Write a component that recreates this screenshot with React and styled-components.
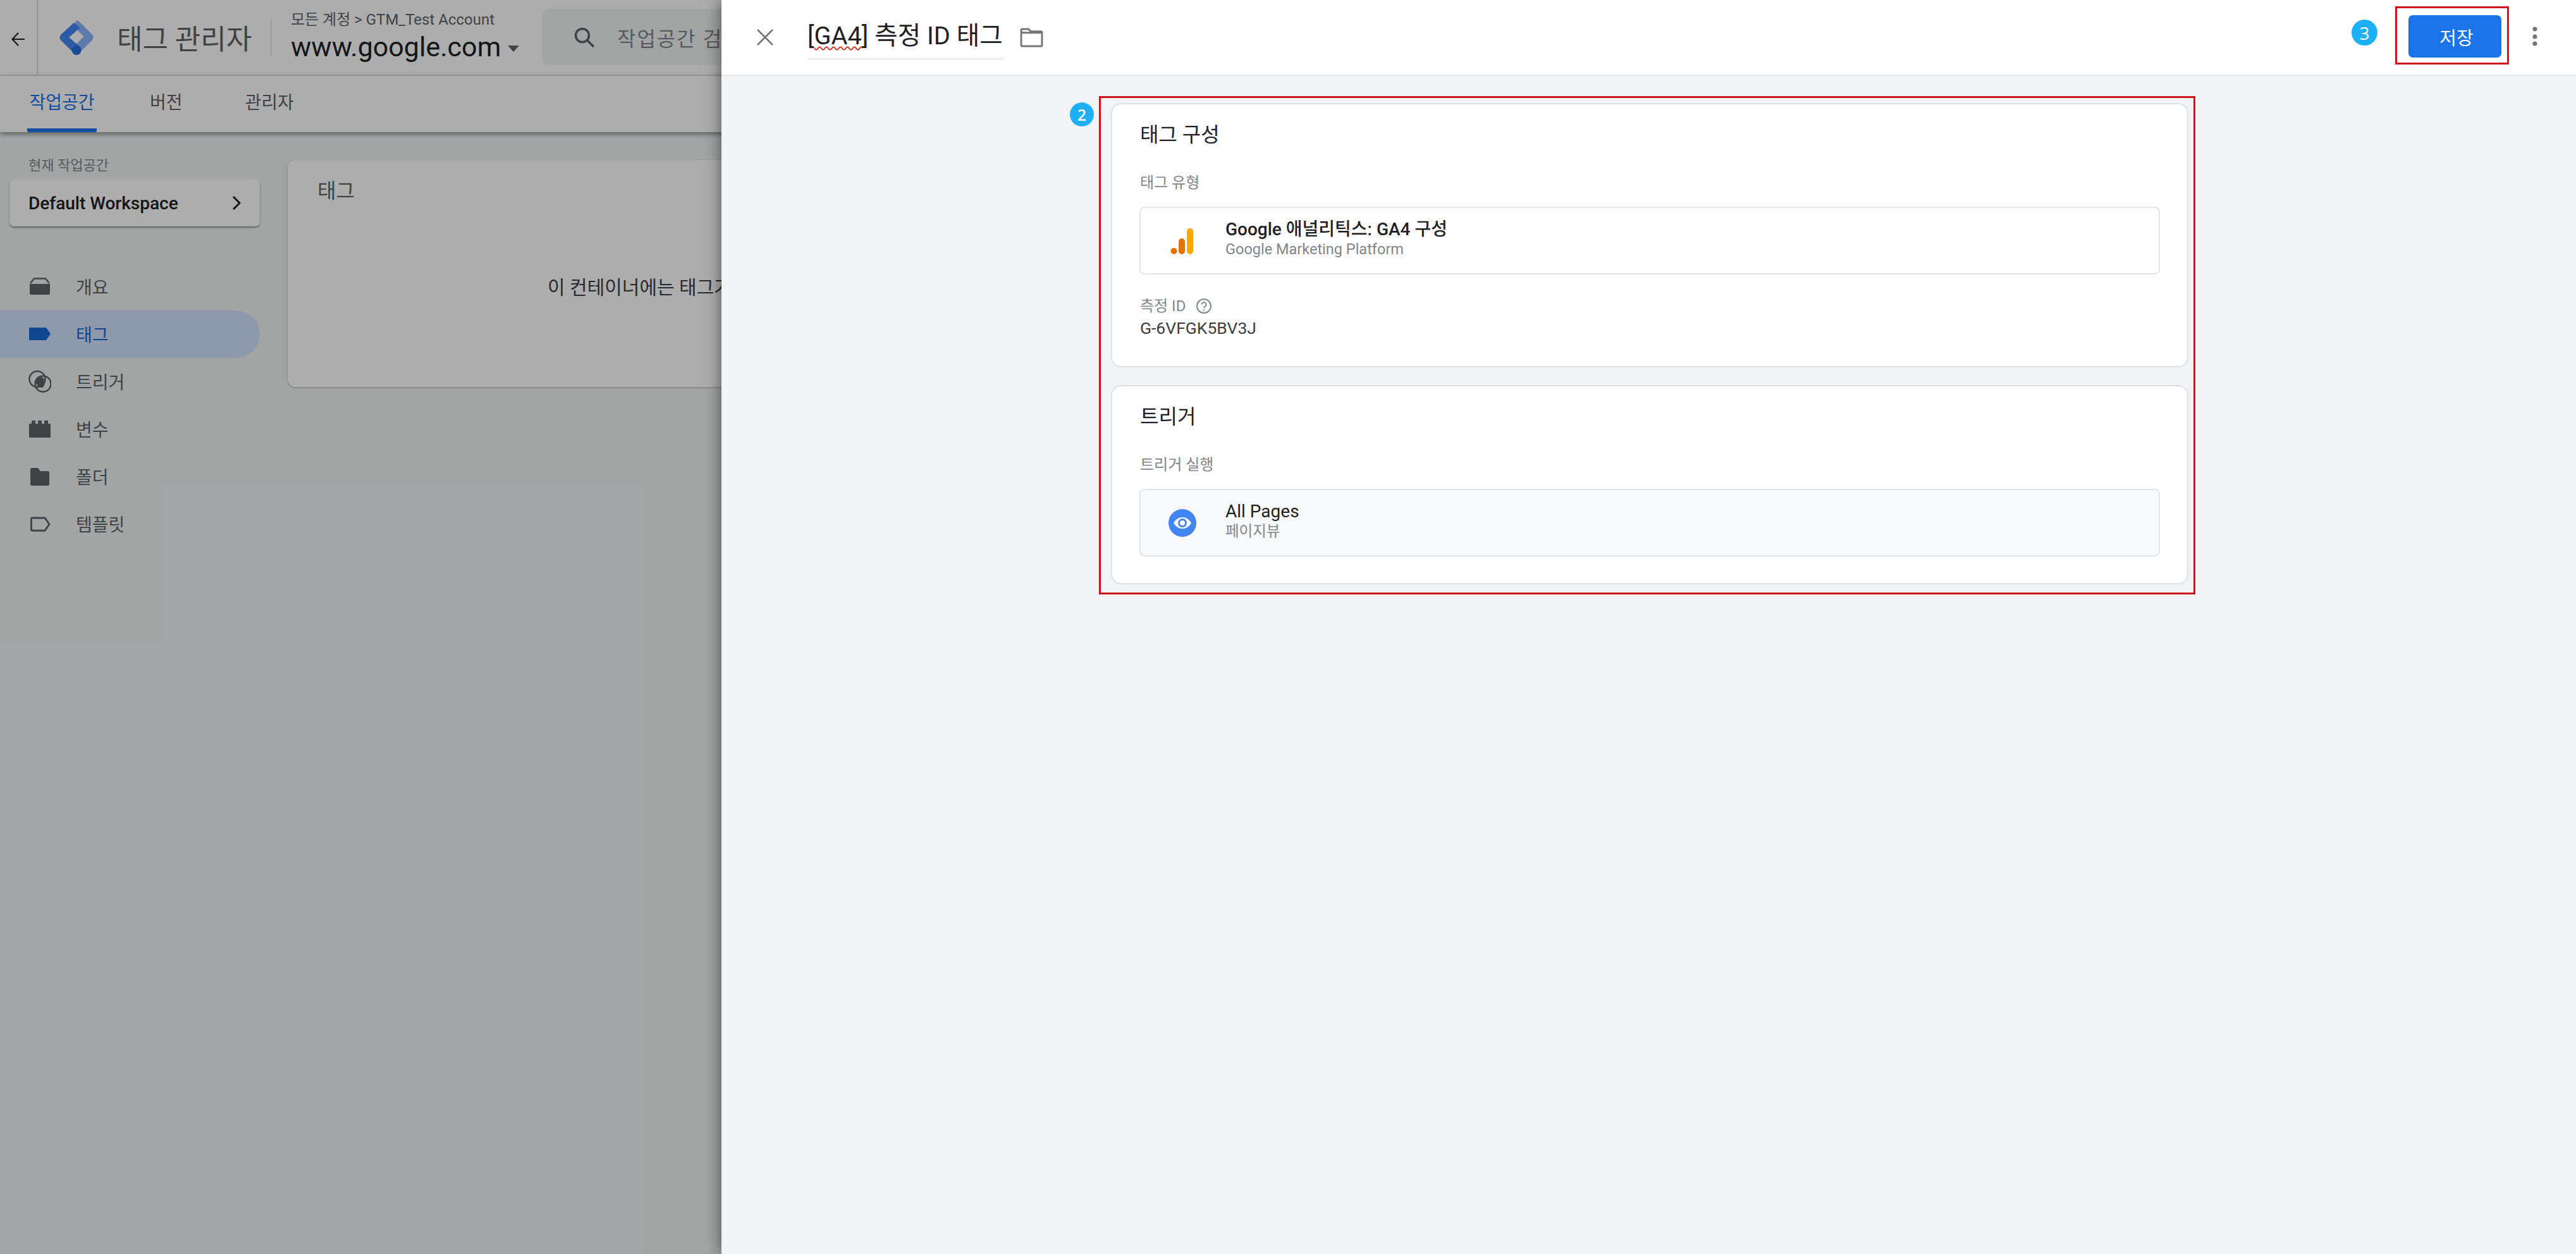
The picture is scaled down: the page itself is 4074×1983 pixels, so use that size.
import React from "react";
import styled, { createGlobalStyle } from "styled-components";

const Global = createGlobalStyle`
  html, body { margin: 0; padding: 0; background: #f1f3f4; }
  * { box-sizing: border-box; }
  body { font-family: Roboto, "Noto Sans CJK KR", sans-serif; color: #202124; }
`;

const Page = styled.div`
  position: relative;
  width: 4074px;
  height: 1983px;
  overflow: hidden;
  display: flex;
  flex-direction: column;
  background: #f1f3f4;
`;

/* ---------- background application ---------- */
const TopBar = styled.header`
  height: 120px;
  flex: none;
  display: flex;
  align-items: center;
  background: #fff;
  border-bottom: 2px solid #e8eaed;
`;
const BackCell = styled.div`
  width: 60px;
  height: 118px;
  display: flex;
  align-items: center;
  justify-content: center;
  border-right: 2px solid #dadce0;
  padding-top: 5px;
`;
const Logo = styled.svg`
  width: 60px;
  height: 60px;
  margin-left: 31px;
  flex: none;
`;
const Product = styled.div`
  margin-left: 34px;
  width: 243px;
  font-size: 44px;
  color: #5f6368;
  white-space: nowrap;
`;
const VRule = styled.div`
  width: 2px;
  height: 60px;
  background: #e8eaed;
`;
const Crumbs = styled.div`
  margin-left: 30px;
  width: 398px;
  display: flex;
  flex-direction: column;
`;
const CrumbPath = styled.div`
  font-size: 24px;
  line-height: 30px;
  color: #5f6368;
  white-space: nowrap;
  margin-top: -2px;
`;
const Domain = styled.div`
  display: flex;
  align-items: center;
  gap: 11px;
  font-size: 43px;
  line-height: 52px;
  margin-top: 2px;
  color: #202124;
`;
const Caret = styled.span`
  width: 0;
  height: 0;
  border-left: 9px solid transparent;
  border-right: 9px solid transparent;
  border-top: 10px solid #5f6368;
  margin-top: 6px;
`;
const Search = styled.div`
  width: 1900px;
  height: 89px;
  margin-top: -1px;
  display: flex;
  align-items: center;
  gap: 34px;
  padding-left: 48px;
  background: #f1f3f4;
  border-radius: 10px;
  color: #80868b;
  font-size: 32px;
  letter-spacing: 2px;
`;
const TabBar = styled.nav`
  position: relative;
  z-index: 1;
  height: 89px;
  flex: none;
  display: flex;
  background: #fff;
  box-shadow: 0 3px 8px rgba(0, 0, 0, 0.45);
  padding-left: 43px;
  gap: 99px;
`;
const Tab = styled.div`
  height: 89px;
  min-width: ${(p) => (p.$active ? "110px" : "0")};
  margin-right: ${(p) => (p.$active ? "-15px" : "0")};
  display: flex;
  align-items: center;
  justify-content: center;
  padding-bottom: 3px;
  font-size: 28px;
  color: ${(p) => (p.$active ? "#1a73e8" : "#5f6368")};
  border-bottom: 6px solid ${(p) => (p.$active ? "#1a73e8" : "transparent")};
  border-radius: 0 0 3px 3px;
`;
const Body = styled.div`
  flex: 1;
  display: flex;
`;
const Sidebar = styled.aside`
  width: 455px;
  flex: none;
  padding-top: 40px;
`;
const SideLabel = styled.div`
  padding-left: 45px;
  font-size: 22px;
  line-height: 26px;
  color: #80868b;
`;
const Workspace = styled.div`
  margin: 9px 44px 0 15px;
  height: 74px;
  padding: 0 30px 0 30px;
  display: flex;
  align-items: center;
  justify-content: space-between;
  background: #fff;
  border-radius: 7px;
  font-size: 28px;
  font-weight: 500;
  box-shadow: 0 2px 3px rgba(0, 0, 0, 0.4);
`;
const NavList = styled.div`
  margin-top: 58px;
  display: flex;
  flex-direction: column;
`;
const NavItem = styled.div`
  width: 411px;
  height: 75px;
  padding: 0 0 2px 45px;
  display: flex;
  align-items: center;
  gap: 39px;
  font-size: 28px;
  color: ${(p) => (p.$active ? "#1967d2" : "#5f6368")};
  background: ${(p) => (p.$active ? "#d2e3fc" : "transparent")};
  border-radius: 0 38px 38px 0;
`;
const NavGlyph = styled.svg`
  width: 36px;
  height: 36px;
  flex: none;
`;
const ListCard = styled.section`
  margin-top: 44px;
  width: 3000px;
  height: 359px;
  background: #fff;
  border-radius: 12px;
  box-shadow: 0 1px 3px rgba(0, 0, 0, 0.3);
`;
const ListTitle = styled.div`
  padding: 31px 0 0 47px;
  font-size: 32px;
  line-height: 36px;
  color: #5f6368;
`;
const EmptyNote = styled.div`
  padding: 117px 0 0 411px;
  font-size: 30px;
  line-height: 36px;
  color: #3c4043;
  white-space: nowrap;
`;

/* ---------- overlay ---------- */
const Scrim = styled.div`
  position: absolute;
  inset: 0;
  z-index: 2;
  background: rgba(0, 0, 0, 0.32);
`;
const Drawer = styled.div`
  position: absolute;
  z-index: 3;
  top: 0;
  bottom: 0;
  left: 1141px;
  right: 0;
  display: flex;
  flex-direction: column;
  background: #f1f3f4;
  box-shadow: 0 0 24px rgba(0, 0, 0, 0.55);
`;
const DrawerHead = styled.div`
  height: 120px;
  flex: none;
  display: flex;
  align-items: center;
  background: #fff;
  border-bottom: 2px solid #e8eaed;
  padding-left: 56px;
`;
const CloseIcon = styled.svg`
  flex: none;
`;
const FolderIcon = styled.svg`
  flex: none;
  margin-left: 25px;
`;
const TitleField = styled.div`
  margin-left: 54px;
  width: 311px;
  height: 66px;
  margin-top: 4px;
  border-bottom: 2px solid #e8eaed;
  font-size: 39.7px;
  line-height: 58px;
  color: #202124;
  white-space: nowrap;
`;
const Squiggle = styled.span`
  text-decoration: underline wavy #d93025 2px;
  text-underline-offset: 3px;
`;
const HeadActions = styled.div`
  margin-left: auto;
  display: flex;
  align-items: center;
  padding-right: 57px;
`;
const Callout = styled.span`
  position: absolute;
  display: flex;
  align-items: center;
  justify-content: center;
  border-radius: 50%;
  color: #fff;
  background: #1eb0f6;
  font-family: "Open Sans", sans-serif;
`;
const StepThree = styled(Callout)`
  width: 41px;
  height: 41px;
  left: 2578px;
  top: 31px;
  font-size: 28px;
`;
const StepTwo = styled(Callout)`
  width: 38px;
  height: 38px;
  left: -49px;
  top: 7px;
  font-size: 25px;
  font-weight: 600;
`;
const SaveFrame = styled.div`
  width: 180px;
  height: 92px;
  margin-top: -6px;
  display: flex;
  align-items: center;
  justify-content: center;
  padding: 3px 0 0 9px;
  border: 3px solid #d0121b;
`;
const SaveBtn = styled.button`
  width: 147px;
  height: 67px;
  border: 0;
  border-radius: 7px;
  background: #1a73e8;
  color: #fff;
  padding: 0 0 0 5px;
  font: 400 29px Roboto, "Noto Sans CJK KR", sans-serif;
`;
const Kebab = styled.svg`
  margin-left: 33px;
  width: 16px;
  height: 40px;
  margin-top: -3px;
`;
const DrawerBody = styled.div`
  flex: 1;
  padding: 32px 0 0 597px;
`;
const Outline = styled.div`
  position: relative;
  width: 1734px;
  height: 788px;
  padding: 8px 8px 0 16px;
  display: flex;
  flex-direction: column;
  gap: 28px;
  border: 3px solid #d0121b;
`;
const Card = styled.section`
  height: ${(p) => p.$h}px;
  flex: none;
  padding: 28px 43px 0 44px;
  background: #fff;
  border: 2px solid #dfe1e5;
  border-radius: 16px;
`;
const CardTitle = styled.h2`
  margin: 0;
  font-size: 32px;
  line-height: 40px;
  font-weight: 400;
  color: #202124;
`;
const FieldLabel = styled.div`
  display: flex;
  align-items: center;
  gap: 16px;
  font-size: 24px;
  line-height: 30px;
  color: #80868b;
  margin-top: ${(p) => p.$mt}px;
`;
const TypeBox = styled.div`
  margin: 23px 0 0 -1px;
  height: 107px;
  display: flex;
  align-items: center;
  gap: 45px;
  padding-left: 43px;
  background: ${(p) => (p.$muted ? "#f8f9fa" : "#fff")};
  border: 2px solid #e3e5e8;
  border-radius: 8px;
`;
const TypeGlyph = styled.svg`
  width: 46px;
  height: 46px;
  flex: none;
`;
const TypeText = styled.div`
  display: flex;
  flex-direction: column;
  padding-bottom: 5px;
`;
const TypeName = styled.div`
  font-size: 28px;
  line-height: 32px;
  font-weight: ${(p) => (p.$bold ? 500 : 400)};
  color: #202124;
`;
const TypeSub = styled.div`
  font-size: 23.5px;
  line-height: 30px;
  color: #80868b;
`;
const FieldValue = styled.div`
  margin-top: 4px;
  font-size: 26.5px;
  line-height: 32px;
  color: #3c4043;
`;

const navIcons = {
  overview: (
    <>
      <path d="M2 14h32v15a2 2 0 0 1-2 2H4a2 2 0 0 1-2-2z" fill="currentColor" />
      <path d="M3 13l6-7.500h18l6 7.500" fill="none" stroke="currentColor" strokeWidth="2.500" />
    </>
  ),
  tags: <path d="M1 8h27l7 10-7 10H1z" fill="currentColor" />,
  triggers: (
    <>
      <path d="M16 10c7 0 10 6 10 10 0 3-2 7-4 8-6 0-11-5-11-11 0-3 3-6 5-7z" fill="currentColor" />
      <circle cx="14" cy="14.500" r="12.500" fill="none" stroke="currentColor" strokeWidth="2.500" />
      <circle cx="23" cy="22" r="12.500" fill="none" stroke="currentColor" strokeWidth="2.500" />
    </>
  ),
  variables: (
    <path d="M1 10h4V5h6v5h4V5h6v5h4V5h6v5h4v22H1z" fill="currentColor" />
  ),
  folders: (
    <path d="M3 7a2 2 0 0 1 2-2h10l4 5h12a2 2 0 0 1 2 2v19a2 2 0 0 1-2 2H5a2 2 0 0 1-2-2z" fill="currentColor" />
  ),
  templates: (
    <path d="M6 9h20l7 10-7 10H6a1.500 1.500 0 0 1-1.500-1.500v-17A1.500 1.500 0 0 1 6 9z" fill="none" stroke="currentColor" strokeWidth="2.800" />
  ),
};

const navRows = [
  ["개요", "overview"],
  ["태그", "tags", true],
  ["트리거", "triggers"],
  ["변수", "variables"],
  ["폴더", "folders"],
  ["템플릿", "templates"],
];

export default function App() {
  return (
    <Page>
      <Global />
      <TopBar>
        <BackCell>
          <svg width="22" height="24" viewBox="0 0 22 24" fill="none" stroke="#202124" strokeWidth="2.200">
            <path d="M21 12H2M11 2L1.500 12 11 22" />
          </svg>
        </BackCell>
        <Logo viewBox="0 0 56 56">
          <path d="M28 3a6 6 0 0 1 4 1.700l19 19a6 6 0 0 1 0 8.500L33 50l-9-9 15-14-16-16z" fill="#8ab4f8" />
          <path d="M24 6.500 5 24a6 6 0 0 0 0 8.500l19 18.500a6 6 0 0 0 9-9L17 28 33 14z" fill="#4285f4" />
          <circle cx="28" cy="47" r="7" fill="#246fdb" />
          <path d="M28 19l9 9-9 9-9-9z" fill="#fff" />
        </Logo>
        <Product>태그 관리자</Product>
        <VRule />
        <Crumbs>
          <CrumbPath>모든 계정 &gt; GTM_Test Account</CrumbPath>
          <Domain>
            www.google.com
            <Caret />
          </Domain>
        </Crumbs>
        <Search>
          <svg width="36" height="36" viewBox="0 0 24 24" fill="none" stroke="#5f6368" strokeWidth="2.400">
            <circle cx="10" cy="10" r="7" />
            <path d="M15 15l7 7" />
          </svg>
          작업공간 검색
        </Search>
      </TopBar>
      <TabBar>
        <Tab $active>작업공간</Tab>
        <Tab>버전</Tab>
        <Tab>관리자</Tab>
      </TabBar>
      <Body>
        <Sidebar>
          <SideLabel>현재 작업공간</SideLabel>
          <Workspace>
            Default Workspace
            <svg width="14" height="24" viewBox="0 0 14 24" fill="none" stroke="#202124" strokeWidth="3">
              <path d="M2 2l10 10L2 22" />
            </svg>
          </Workspace>
          <NavList>
            {navRows.map(([label, icon, active]) => (
              <NavItem key={label} $active={active}>
                <NavGlyph viewBox="0 0 36 36">{navIcons[icon]}</NavGlyph>
                {label}
              </NavItem>
            ))}
          </NavList>
        </Sidebar>
        <ListCard>
          <ListTitle>태그</ListTitle>
          <EmptyNote>이 컨테이너에는 태그가 없습니다.</EmptyNote>
        </ListCard>
      </Body>
      <Scrim />
      <Drawer>
        <DrawerHead>
          <CloseIcon width="26" height="26" viewBox="0 0 26 26" fill="none" stroke="#757575" strokeWidth="2.600">
            <path d="M1 1l24 24M25 1L1 25" />
          </CloseIcon>
          <TitleField>
            [<Squiggle>GA4</Squiggle>] 측정 ID 태그
          </TitleField>
          <FolderIcon width="37" height="31" viewBox="0 0 38 32" fill="none" stroke="#757575" strokeWidth="3">
            <path d="M2 4a2 2 0 0 1 2-2h10l4 4h16a2 2 0 0 1 2 2v20a2 2 0 0 1-2 2H4a2 2 0 0 1-2-2z" />
            <path d="M2 8h34" />
          </FolderIcon>
          <HeadActions>
            <StepThree>3</StepThree>
            <SaveFrame>
              <SaveBtn>저장</SaveBtn>
            </SaveFrame>
            <Kebab viewBox="0 0 16 40" fill="#757575">
              <circle cx="8" cy="8" r="3.500" />
              <circle cx="8" cy="20" r="3.500" />
              <circle cx="8" cy="31" r="3.500" />
            </Kebab>
          </HeadActions>
        </DrawerHead>
        <DrawerBody>
          <Outline>
            <StepTwo>2</StepTwo>
            <Card $h={418}>
              <CardTitle>태그 구성</CardTitle>
              <FieldLabel $mt={41}>태그 유형</FieldLabel>
              <TypeBox>
                <TypeGlyph viewBox="0 0 46 46">
                  <rect x="30" y="3" width="10" height="41" rx="5" fill="#f9ab00" />
                  <rect x="17" y="19" width="10" height="25" rx="5" fill="#e37400" />
                  <circle cx="9.500" cy="39" r="5" fill="#e37400" />
                </TypeGlyph>
                <TypeText>
                  <TypeName $bold>Google 애널리틱스: GA4 구성</TypeName>
                  <TypeSub>Google Marketing Platform</TypeSub>
                </TypeText>
              </TypeBox>
              <FieldLabel $mt={35}>
                측정 ID
                <svg width="26" height="26" viewBox="0 0 26 26" fill="none" stroke="#80868b" strokeWidth="2">
                  <circle cx="13" cy="13" r="11" />
                  <path d="M9.500 10.500a3.500 3.500 0 1 1 5.500 3c-1.300.9-2 1.500-2 3" />
                  <path d="M13 18.500v2" />
                </svg>
              </FieldLabel>
              <FieldValue>G-6VFGK5BV3J</FieldValue>
            </Card>
            <Card $h={315}>
              <CardTitle>트리거</CardTitle>
              <FieldLabel $mt={41}>트리거 실행</FieldLabel>
              <TypeBox $muted>
                <TypeGlyph viewBox="0 0 46 46">
                  <circle cx="23" cy="23" r="22" fill="#4285f4" />
                  <path d="M9 23c3.500-6 8.500-9 14-9s10.500 3 14 9c-3.500 6-8.500 9-14 9s-10.500-3-14-9z" fill="#fff" />
                  <circle cx="23" cy="23" r="5.500" fill="none" stroke="#4285f4" strokeWidth="3" />
                </TypeGlyph>
                <TypeText>
                  <TypeName>All Pages</TypeName>
                  <TypeSub>페이지뷰</TypeSub>
                </TypeText>
              </TypeBox>
            </Card>
          </Outline>
        </DrawerBody>
      </Drawer>
    </Page>
  );
}
